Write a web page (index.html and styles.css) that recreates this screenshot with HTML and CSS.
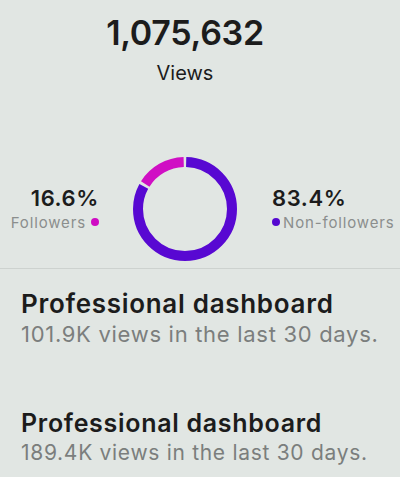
FILE: index.html
```html
<!DOCTYPE html>
<html lang="en">
<head>
  <meta charset="UTF-8" />
  <meta name="viewport" content="width=device-width, initial-scale=1.0" />
  <title>Views insights</title>
  <link rel="stylesheet" href="styles.css">
</head>
<body>

  <div class="overview">
    <div class="overview-inner">
      <div class="total">1,075,632</div>
      <div class="total-label">Views</div>

      <div class="split">
        <div class="split-side left">
          <div class="split-value">16.6%</div>
          <div class="split-label">Followers <span class="dot pink"></span></div>
        </div>

        <svg class="donut" width="104" height="104" viewBox="0 0 104 104">
          <g transform="rotate(-90 52 52)">
            <circle class="ring purple" cx="52" cy="52" r="47" stroke-dasharray="243.5 400" stroke-dashoffset="-1.2"></circle>
            <circle class="ring pink" cx="52" cy="52" r="47" stroke-dasharray="46 400" stroke-dashoffset="-247.5"></circle>
          </g>
        </svg>

        <div class="split-side right">
          <div class="split-value">83.4%</div>
          <div class="split-label"><span class="dot purple"></span>Non-followers</div>
        </div>
      </div>
    </div>
  </div>

  <div class="dashboard">
    <div class="dash-title">Professional dashboard</div>
    <div class="dash-sub">101.9K views in the last 30 days.</div>
  </div>

  <div class="dashboard second">
    <div class="dash-title">Professional dashboard</div>
    <div class="dash-sub">189.4K views in the last 30 days.</div>
  </div>

</body>
</html>
```

FILE: styles.css
```css
* {
  margin: 0;
  padding: 0;
  box-sizing: border-box;
  font-family: 'Inter', 'Liberation Sans', sans-serif;
}

body {
  background-color: #e1e6e3;
  color: #1c1c1c;
  width: 400px;
  height: 477px;
  overflow: hidden;
}

.overview {
  border-bottom: 1px solid #cdd2cf;
  padding: 12px 0 7px;
}

.overview-inner {
  width: 370px;
  display: flex;
  flex-direction: column;
  align-items: center;
}

.total {
  font-size: 34px;
  font-weight: 600;
  line-height: 42px;
  letter-spacing: -0.3px;
}

.total-label {
  font-size: 20px;
  line-height: 26px;
  margin-top: 6px;
}

.split {
  display: flex;
  align-items: center;
  margin-top: 71px;
  width: 100%;
}

.split-side {
  white-space: nowrap;
}

.split-side.left {
  flex: 0 0 133px;
  text-align: right;
  padding-right: 34px;
}

.split-side.right {
  flex: 1;
  padding-left: 35px;
}

.split-value {
  font-size: 22px;
  font-weight: 600;
  line-height: 26px;
  letter-spacing: 0.6px;
}

.split-label {
  font-size: 15px;
  color: #8b8e8d;
  line-height: 20px;
  letter-spacing: 0.85px;
  margin-top: 2px;
}

.dot {
  display: inline-block;
  width: 8px;
  height: 8px;
  border-radius: 50%;
  vertical-align: 2px;
}

.dot.pink {
  background-color: #cf0cc3;
}

.dot.purple {
  background-color: #5508d0;
  margin-right: 3px;
}

.donut {
  flex-shrink: 0;
}

.ring {
  fill: none;
  stroke-width: 10;
}

.ring.purple {
  stroke: #5808d2;
}

.ring.pink {
  stroke: #d00fc4;
}

.dashboard {
  padding: 19px 21px 0;
}

.dash-title {
  font-size: 26px;
  font-weight: 600;
  line-height: 32px;
  letter-spacing: 0.7px;
}

.dash-sub {
  font-size: 22px;
  color: #7b7e7d;
  line-height: 28px;
  letter-spacing: 0.7px;
}

.dashboard.second {
  padding-top: 59px;
}

.dashboard.second .dash-title {
  font-size: 25px;
}

.dashboard.second .dash-sub {
  font-size: 21px;
}
```
